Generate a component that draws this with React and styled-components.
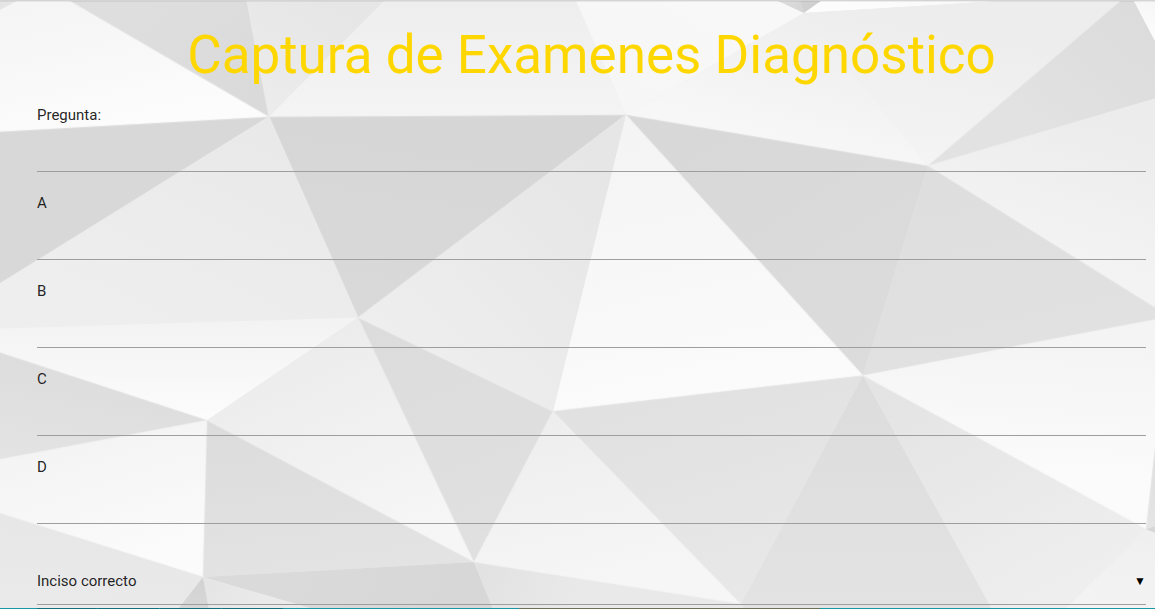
import React from "react";
import styled, { createGlobalStyle } from "styled-components";

const GlobalStyle = createGlobalStyle`
  *, *::before, *::after { box-sizing: border-box; }
  body {
    margin: 0;
    background: #ececec;
    color: rgba(0, 0, 0, 0.87);
    font-family: Roboto, "Liberation Sans", sans-serif;
    font-size: 15px;
    line-height: 22px;
  }
`;

const Page = styled.div`
  position: relative;
  isolation: isolate;
  display: flex;
  flex-direction: column;
  min-height: 100vh;
  border-top: 1px solid #d4d4d4;
`;

const Backdrop = styled.svg`
  position: absolute;
  inset: 0;
  z-index: -1;
  width: 100%;
  height: 100%;
`;

const Main = styled.main`
  flex: 1;
  padding: 24px 9px 3px 37px;
`;

const Title = styled.h2`
  margin: 0 0 18px;
  color: #ffd700;
  font-size: 53px;
  font-weight: 400;
  line-height: 61px;
  text-align: center;
`;

const Form = styled.form`
  display: flex;
  flex-direction: column;
  gap: 20px;
`;

const Field = styled.div`
  display: flex;
  flex-direction: column;
`;

const Label = styled.label`
  font-weight: 400;
`;

const TextInput = styled.input`
  width: 100%;
  height: 46px;
  padding: 0;
  border: 0;
  border-bottom: 1px solid #9e9e9e;
  border-radius: 0;
  outline: 0;
  background: transparent;
  color: inherit;
  font: inherit;
`;

const SelectField = styled.div`
  position: relative;
  padding-top: 15px;
`;

const Select = styled.select`
  display: block;
  width: 100%;
  height: 46px;
  padding: 0 0 2px;
  border: 0;
  border-bottom: 1px solid #9e9e9e;
  border-radius: 0;
  outline: 0;
  appearance: none;
  background: transparent;
  color: inherit;
  font: inherit;
`;

const Caret = styled.span`
  position: absolute;
  right: 0;
  bottom: 13px;
  color: #000;
  font-size: 12px;
  pointer-events: none;
`;

const BottomBar = styled.footer`
  display: flex;
  height: 1px;
  background: #1b98a5;
`;

const BarPart = styled.span`
  flex: ${({ $span }) => $span} 0 0;
  background: ${({ $color }) => $color};
`;

// Each facet: corner points, shade at the start, shade at the end,
// and the gradient axis (x1 y1 x2 y2) in drawing units.
const facets = [
  ["0,0 17,0 0,9", "#e4e4e4", "#e8e8e8", [0, 0, 17, 9]],
  ["17,0 70,0 269,116 0,131 0,9", "#f5f5f5", "#fcfcfc", [60, 0, 90, 131]],
  ["70,0 247,0 269,116", "#dedede", "#dadada", [150, 0, 240, 110]],
  ["247,0 384,0 269,116", "#e6e6e6", "#ececec", [330, 0, 260, 110]],
  ["384,0 576,0 626,114 269,116", "#eeeeee", "#f4f4f4", [430, 0, 430, 116]],
  ["576,0 778,0 804,12 626,114", "#f8f8f8", "#f6f6f6", [690, 0, 630, 110]],
  ["778,0 800,0 804,12", "#dedede", "#d4d4d4", [778, 0, 804, 12]],
  ["800,0 821,0 804,12", "#d0d0d0", "#d0d0d0", [800, 0, 804, 12]],
  ["821,0 1000,0 804,12", "#f9f9f9", "#fdfdfd", [1000, 0, 804, 12]],
  ["804,12 928,165 626,114", "#eeeeee", "#f7f7f7", [804, 12, 770, 138]],
  ["804,12 1000,0 1120,0 928,165", "#ededed", "#f4f4f4", [940, 20, 915, 160]],
  ["1120,0 1134,0 1155,40 1155,98 928,165", "#dcdcdc", "#e2e2e2", [1130, 10, 1030, 130]],
  ["1134,0 1155,0 1155,40", "#f6f6f6", "#fbfbfb", [1155, 0, 1144, 25]],
  ["928,165 1155,98 1155,307", "#ececec", "#f3f3f3", [1100, 120, 1060, 250]],
  ["928,165 1155,307 1155,319 863,375", "#dedede", "#e1e1e1", [950, 170, 990, 350]],
  ["626,114 928,165 863,375", "#d8d8d8", "#dcdcdc", [700, 115, 860, 375]],
  ["626,114 863,375 553,411", "#f4f4f4", "#fbfbfb", [620, 130, 680, 400]],
  ["626,114 553,411 358,317", "#e6e6e6", "#eeeeee", [600, 170, 400, 350]],
  ["269,116 626,114 358,317", "#d6d6d6", "#d9d9d9", [400, 116, 370, 310]],
  ["0,131 269,116 0,283", "#d8d8d8", "#d8d8d8", [0, 131, 0, 283]],
  ["269,116 358,317 0,328 0,283", "#e9e9e9", "#eeeeee", [250, 130, 160, 325]],
  ["0,328 358,317 207,420 0,352", "#f3f3f3", "#fcfcfc", [190, 322, 190, 420]],
  ["0,352 207,420 0,459", "#dddddd", "#e3e3e3", [40, 360, 20, 459]],
  ["0,459 207,420 203,577 0,513", "#f4f4f4", "#fbfbfb", [90, 440, 130, 565]],
  ["0,513 203,577 178,609 0,609", "#e7e7e7", "#eaeaea", [80, 530, 70, 609]],
  ["203,577 209,609 178,609", "#d7d7d7", "#d2d2d2", [190, 609, 203, 577]],
  ["358,317 474,562 207,420", "#ececec", "#f6f6f6", [310, 340, 400, 540]],
  ["207,420 474,562 203,577", "#dcdcdc", "#e3e3e3", [250, 430, 270, 577]],
  ["358,317 553,411 474,562", "#dcdcdc", "#e0e0e0", [380, 325, 470, 550]],
  ["203,577 474,562 493,609 313,609", "#dadada", "#d7d7d7", [300, 569, 440, 609]],
  ["203,577 313,609 209,609", "#e5e5e5", "#eaeaea", [210, 580, 260, 609]],
  ["474,562 741,604 745,609 493,609", "#e2e2e2", "#e9e9e9", [480, 570, 570, 609]],
  ["553,411 741,604 474,562", "#eeeeee", "#f6f6f6", [560, 420, 600, 585]],
  ["863,375 741,604 553,411", "#e1e1e1", "#e8e8e8", [680, 395, 745, 600]],
  ["863,375 992,609 745,609 741,604", "#dcdcdc", "#e3e3e3", [860, 380, 860, 609]],
  ["863,375 1146,529 1065,609 992,609", "#e4e4e4", "#eeeeee", [900, 390, 1020, 609]],
  ["863,375 1155,319 1155,448 1146,529", "#f4f4f4", "#fbfbfb", [1050, 338, 1040, 475]],
  ["1155,448 1155,526 1146,529", "#dedede", "#e5e5e5", [1155, 448, 1148, 529]],
  ["1155,526 1155,533 1146,529", "#d4d4d4", "#d9d9d9", [1146, 529, 1155, 529]],
  ["1146,529 1155,533 1155,609 1065,609", "#efefef", "#f3f3f3", [1146, 529, 1130, 609]],
];

const edges =
  "M70 0 269 116 0 131M0 283 269 116 247 0M269 116 358 317M269 116 626 114 928 165 1155 307M358 317 626 114 863 375M863 375 553 411M358 317 553 411M358 317 474 562M0 352 207 420 0 459M207 420 203 577 0 513M207 420 474 562M474 562 741 604 553 411 474 562M863 375 1155 319M863 375 1146 529 1155 448M1120 0 928 165 1155 98";

function PolygonBackdrop() {
  return (
    <Backdrop viewBox="0 0 1155 609" preserveAspectRatio="none" aria-hidden="true">
      <defs>
        {facets.map(([, from, to, [x1, y1, x2, y2]], i) => (
          <linearGradient
            key={i}
            id={`facet-${i}`}
            gradientUnits="userSpaceOnUse"
            x1={x1}
            y1={y1}
            x2={x2}
            y2={y2}
          >
            <stop offset="0" stopColor={from} />
            <stop offset="1" stopColor={to} />
          </linearGradient>
        ))}
      </defs>
      {facets.map(([points], i) => (
        <polygon key={i} points={points} fill={`url(#facet-${i})`} />
      ))}
      <path d={edges} fill="none" stroke="#f0f0f0" strokeWidth="2" strokeOpacity="0.3" />
      <rect width="1155" height="1" fill="#000" fillOpacity="0.06" />
    </Backdrop>
  );
}

const questions = [
  { id: "pregunta", label: "Pregunta:" },
  { id: "inciso-a", label: "A" },
  { id: "inciso-b", label: "B" },
  { id: "inciso-c", label: "C" },
  { id: "inciso-d", label: "D" },
];

const barParts = [
  [37, "transparent"],
  [60, "#14707a"],
  [1, "#1b98a5"],
  [61, "#14707a"],
  [1, "#1b98a5"],
  [61, "#14707a"],
  [1, "#1b98a5"],
  [61, "#14707a"],
  [236, "transparent"],
  [301, "#6b7355"],
  [335, "transparent"],
];

export default function App() {
  return (
    <>
      <GlobalStyle />
      <Page>
        <PolygonBackdrop />
        <Main>
          <Title>Captura de Examenes Diagnóstico</Title>
          <Form>
            {questions.map(({ id, label }) => (
              <Field key={id}>
                <Label htmlFor={id}>{label}</Label>
                <TextInput id={id} name={id} type="text" autoComplete="off" />
              </Field>
            ))}
            <SelectField>
              <Select name="correcto" aria-label="Inciso correcto" defaultValue="">
                <option value="">Inciso correcto</option>
                <option value="A">A</option>
                <option value="B">B</option>
                <option value="C">C</option>
                <option value="D">D</option>
              </Select>
              <Caret aria-hidden="true">▼</Caret>
            </SelectField>
          </Form>
        </Main>
        <BottomBar>
          {barParts.map(([span, color], i) => (
            <BarPart key={i} $span={span} $color={color} />
          ))}
        </BottomBar>
      </Page>
    </>
  );
}
